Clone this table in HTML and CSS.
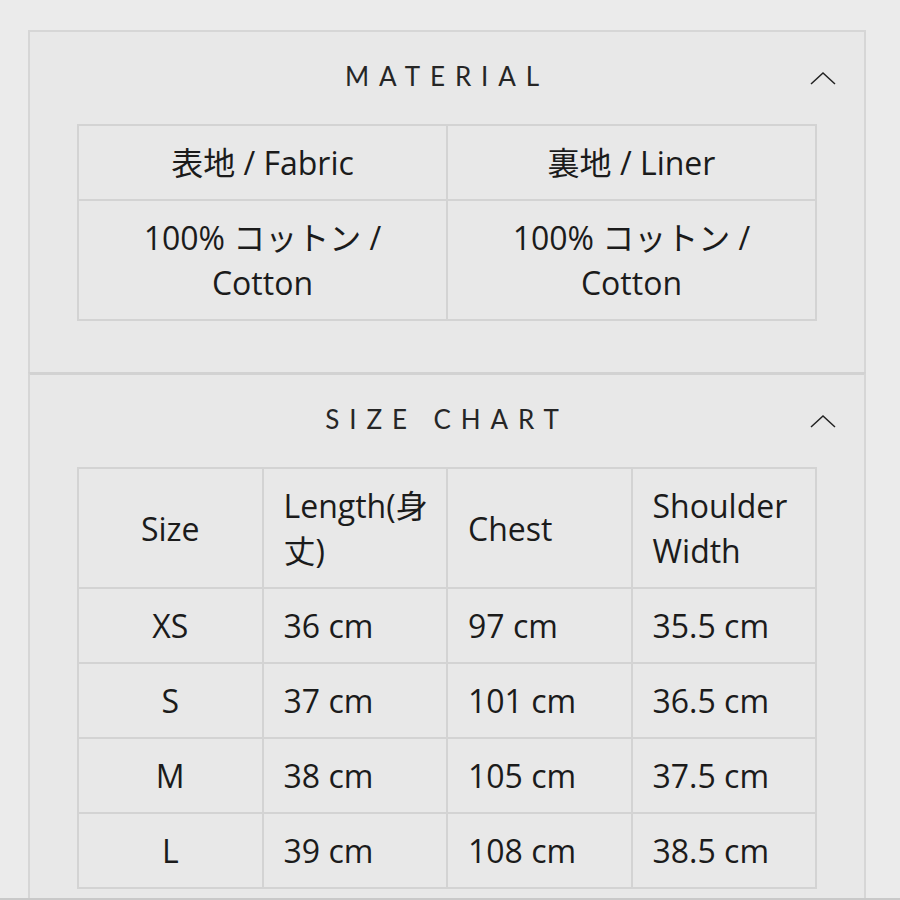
FILE: index.html
```html
<!DOCTYPE html>
<html lang="ja">
<head>
  <meta charset="UTF-8">
  <meta name="viewport" content="width=device-width, initial-scale=1.0">
  <title>Material / Size Chart</title>
  <link rel="stylesheet" href="styles.css">
</head>
<body>
  <div class="details">
    <section class="panel">
      <div class="panel-head">
        <span></span>
        <h2 class="panel-title">MATERIAL</h2>
        <svg class="chevron" width="26" height="14" viewBox="0 0 26 14"><path d="M1 13 L13 2 L25 13" fill="none" stroke="#222" stroke-width="1.5"/></svg>
      </div>
      <table class="spec material">
        <tr>
          <td>表地 / Fabric</td>
          <td>裏地 / Liner</td>
        </tr>
        <tr>
          <td>100% コットン / Cotton</td>
          <td>100% コットン / Cotton</td>
        </tr>
      </table>
    </section>

    <section class="panel">
      <div class="panel-head">
        <span></span>
        <h2 class="panel-title">SIZE CHART</h2>
        <svg class="chevron" width="26" height="14" viewBox="0 0 26 14"><path d="M1 13 L13 2 L25 13" fill="none" stroke="#222" stroke-width="1.5"/></svg>
      </div>
      <table class="spec sizes">
        <tr>
          <td>Size</td>
          <td>Length(身丈)</td>
          <td>Chest</td>
          <td>Shoulder Width</td>
        </tr>
        <tr><td>XS</td><td>36 cm</td><td>97 cm</td><td>35.5 cm</td></tr>
        <tr><td>S</td><td>37 cm</td><td>101 cm</td><td>36.5 cm</td></tr>
        <tr><td>M</td><td>38 cm</td><td>105 cm</td><td>37.5 cm</td></tr>
        <tr><td>L</td><td>39 cm</td><td>108 cm</td><td>38.5 cm</td></tr>
      </table>
    </section>
  </div>
  <div class="bottom-bar"></div>
</body>
</html>
```

FILE: styles.css
```css
body {
  margin: 0;
  background-color: #ebebeb;
  font-family: "Open Sans", "Noto Sans CJK JP", sans-serif;
  color: #1b1b1b;
}
.details {
  padding: 30px 34px 0 28px;
}
.panel {
  background-color: #e8e8e8;
  border: 2px solid #d6d6d6;
  border-bottom: none;
  padding: 0 47px 51px 47px;
}
.panel + .panel {
  border-top: 3px solid #d2d2d2;
}
.panel-head {
  display: grid;
  grid-template-columns: 1fr auto 1fr;
  align-items: center;
  height: 92px;
}
.panel-title {
  margin: 0 0 5px 0;
  font-family: Lato, sans-serif;
  font-size: 26px;
  font-weight: 400;
  letter-spacing: 0.38em;
  color: #262626;
}
.chevron {
  justify-self: end;
  margin-right: -19px;
}
.spec {
  width: 100%;
  border-collapse: collapse;
  table-layout: fixed;
  font-size: 32px;
  line-height: 45px;
}
.spec td {
  border: 2px solid #d3d3d3;
  padding: 14px 10px 14px 20px;
  vertical-align: middle;
}
.material td {
  text-align: center;
  padding: 14px 30px;
}
.sizes td:first-child {
  text-align: center;
  padding: 14px 15px;
}
.bottom-bar {
  position: fixed;
  left: 0;
  right: 0;
  bottom: 0;
  height: 2px;
  background-color: #c9c9c9;
}
```
